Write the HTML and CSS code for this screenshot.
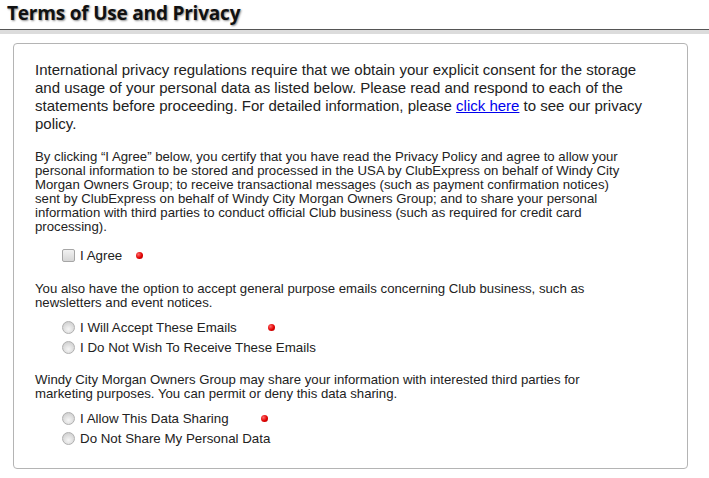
FILE: index.html
```html
<!DOCTYPE html>
<html lang="en">
<head>
    <meta charset="UTF-8">
    <meta name="viewport" content="width=device-width, initial-scale=1.0">
    <title>Terms of Use and Privacy</title>
    <link rel="stylesheet" href="styles.css">
</head>
<body>
    <h1 class="page-title">Terms of Use and Privacy</h1>
    <div class="title-rule"></div>

    <div class="consent-box">
        <p class="intro">International privacy regulations require that we obtain your explicit consent for the storage and usage of your personal data as listed below. Please read and respond to each of the statements before proceeding. For detailed information, please <a href="#">click here</a> to see our privacy policy.</p>

        <p class="statement">By clicking &ldquo;I Agree&rdquo; below, you certify that you have read the Privacy Policy and agree to allow your personal information to be stored and processed in the USA by ClubExpress on behalf of Windy City Morgan Owners Group; to receive transactional messages (such as payment confirmation notices) sent by ClubExpress on behalf of Windy City Morgan Owners Group; and to share your personal information with third parties to conduct official Club business (such as required for credit card processing).</p>
        <div class="options first">
            <div class="option">
                <input type="checkbox" id="agree">
                <label for="agree">I Agree</label>
                <span class="req req-agree"></span>
            </div>
        </div>

        <p class="statement">You also have the option to accept general purpose emails concerning Club business, such as newsletters and event notices.</p>
        <div class="options">
            <div class="option">
                <input type="radio" name="emails" id="emails-yes">
                <label for="emails-yes">I Will Accept These Emails</label>
                <span class="req req-emails"></span>
            </div>
            <div class="option">
                <input type="radio" name="emails" id="emails-no">
                <label for="emails-no">I Do Not Wish To Receive These Emails</label>
            </div>
        </div>

        <p class="statement">Windy City Morgan Owners Group may share your information with interested third parties for marketing purposes. You can permit or deny this data sharing.</p>
        <div class="options">
            <div class="option">
                <input type="radio" name="sharing" id="share-yes">
                <label for="share-yes">I Allow This Data Sharing</label>
                <span class="req req-share"></span>
            </div>
            <div class="option">
                <input type="radio" name="sharing" id="share-no">
                <label for="share-no">Do Not Share My Personal Data</label>
            </div>
        </div>
    </div>
</body>
</html>
```

FILE: styles.css
```css
body {
    margin: 0;
    background-color: #fff;
    font-family: "Liberation Sans", Arial, sans-serif;
    color: #222;
}
.page-title {
    margin: 0;
    padding: 1px 0 0 7px;
    height: 28px;
    box-sizing: border-box;
    font-family: "Open Sans", "DejaVu Sans", sans-serif;
    font-size: 19px;
    font-weight: bold;
    line-height: 24px;
    color: #111;
    letter-spacing: -0.2px;
    text-shadow: 1px 1px 2px rgba(0,0,0,0.45);
}
.title-rule {
    height: 1px;
    margin-top: 1px;
    background-color: #555;
    border-bottom: 4px solid #dcdcdc;
    margin-bottom: 9px;
}
.consent-box {
    margin: 0 21px 0 13px;
    border: 1px solid #b4b4b4;
    border-radius: 4px;
    padding: 17px 22px 20px 21px;
}
.intro {
    margin: 0 0 17px;
    font-size: 15px;
    line-height: 18px;
}
.intro a {
    color: #0000ee;
}
.statement {
    margin: 0;
    max-width: 595px;
    font-size: 13.2px;
    line-height: 14px;
}
.options {
    margin: 7px 0 16px 27px;
}
.options.first {
    margin-top: 11px;
    margin-bottom: 17px;
}
.options:last-child {
    margin-bottom: 0;
}
.option {
    display: flex;
    align-items: center;
    height: 20px;
    font-size: 13.33px;
}
.option input {
    appearance: none;
    -webkit-appearance: none;
    box-sizing: border-box;
    margin: 0 5px 0 0;
    width: 13px;
    height: 13px;
    border: 1px solid #a6a6a6;
    background: linear-gradient(#cfcfcf, #f4f4f4);
}
.option input[type="checkbox"] {
    border-radius: 2px;
    background: linear-gradient(#f2f2f2, #d6d6d6);
}
.option input[type="radio"] {
    border-radius: 50%;
    border-color: #b0b0b0;
    background: radial-gradient(circle at 50% 65%, #f6f6f6, #dadada 60%, #c8c8c8);
}
.req {
    width: 7px;
    height: 7px;
    border-radius: 50%;
    background: radial-gradient(circle at 35% 35%, #ff6a6a, #e00000 55%, #a00000);
}
.req-agree {
    margin-left: 14px;
}
.req-emails {
    margin-left: 31px;
}
.req-share {
    margin-left: 32px;
}
```
